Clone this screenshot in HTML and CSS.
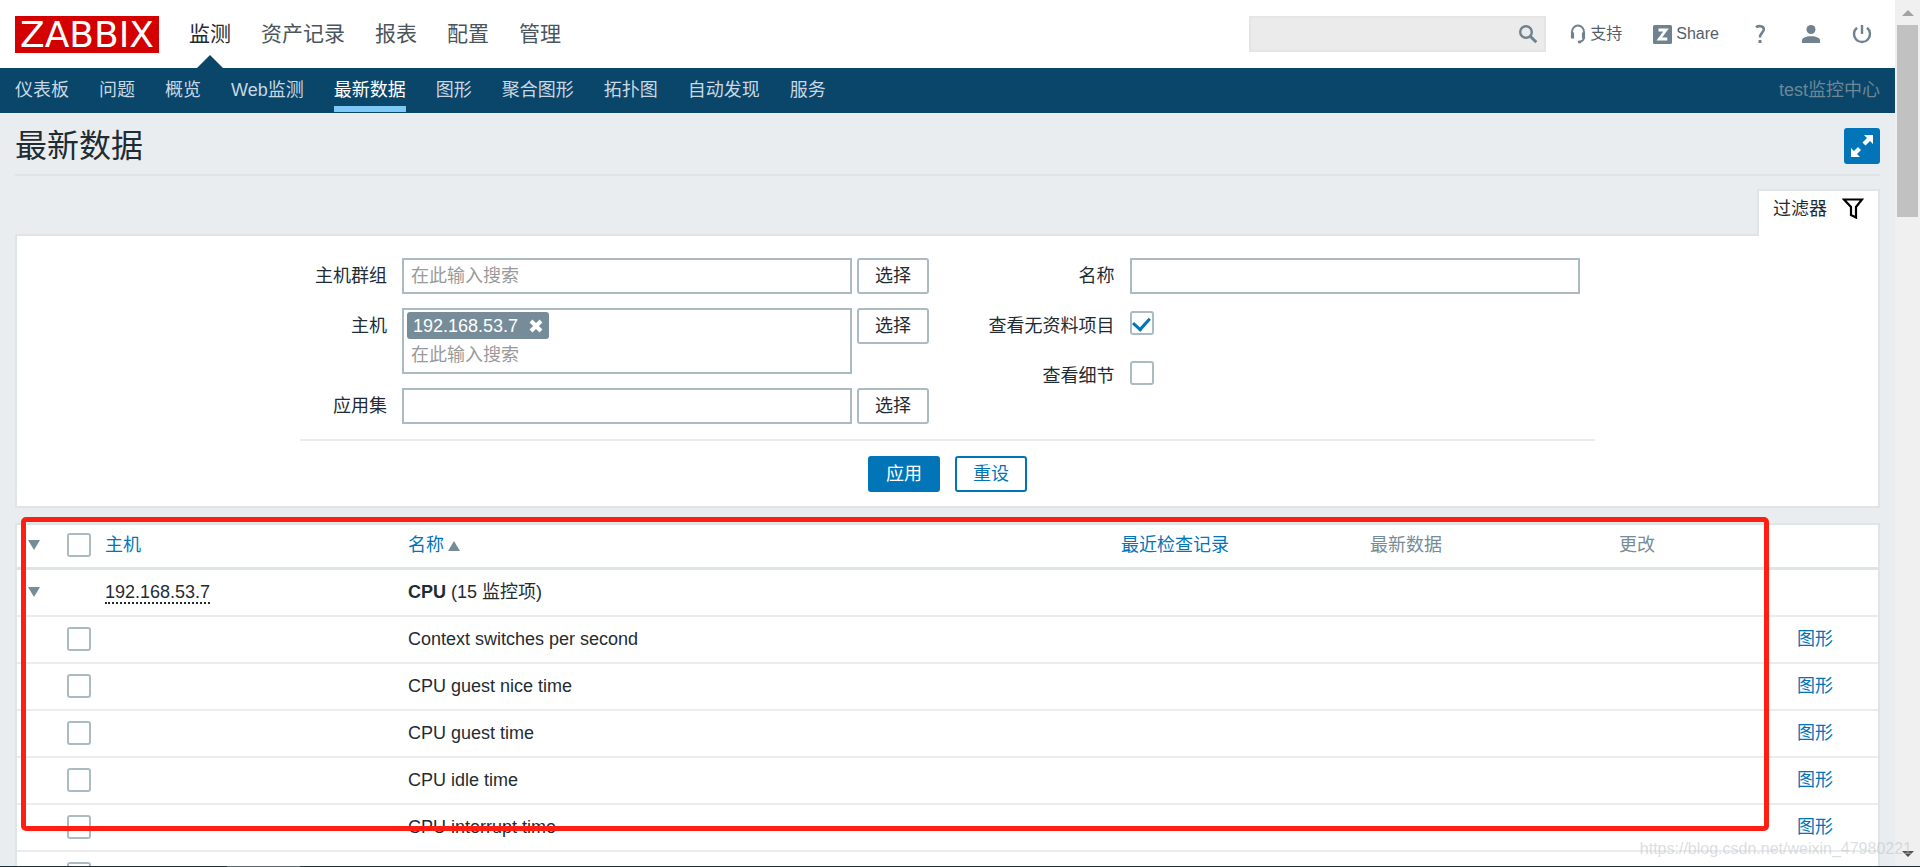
FILE: index.html
```html
<!DOCTYPE html>
<html lang="zh-CN">
<head>
<meta charset="utf-8">
<title>最新数据</title>
<link rel="stylesheet" href="styles.css">
</head>
<body>
<div class="page">
  <header class="top">
    <a class="logo" href="#">ZABBIX</a>
    <nav class="main-menu">
      <a class="active" href="#">监测</a>
      <a href="#">资产记录</a>
      <a href="#">报表</a>
      <a href="#">配置</a>
      <a href="#">管理</a>
    </nav>
    <form class="search">
      <input type="text" aria-label="搜索">
      <button type="button" aria-label="搜索">
        <svg width="20" height="20" viewBox="0 0 20 20" fill="none" stroke="#6f828d"><circle cx="8" cy="8" r="5.8" stroke-width="2.4"/><path d="M12 12l6.3 6.3" stroke-width="3"/></svg>
      </button>
    </form>
    <a class="tool support" href="#">
      <svg width="16" height="20" viewBox="0 0 16 20" fill="none" stroke="#6f828d" stroke-width="2"><path d="M2 9.500V8a6 6.500 0 0 1 12 0v5c0 3-1.500 4.500-5 5"/><path d="M2.500 8.500v6M13.500 8.500v6" stroke-width="3.200"/><path d="M8 18h3" stroke-width="2.600"/></svg>
      <span>支持</span>
    </a>
    <a class="tool share" href="#">
      <svg width="19" height="19" viewBox="0 0 19 19"><rect width="19" height="19" rx="1.500" fill="#6f828d"/><path d="M5.500 5h7.500L6.300 14h8" fill="none" stroke="#fff" stroke-width="2.800"/></svg>
      <span>Share</span>
    </a>
    <a class="tool icon" href="#" aria-label="帮助">
      <svg width="20" height="20" viewBox="0 0 20 20" fill="none" stroke="#6f828d" stroke-width="2.600"><path d="M6 3.200C8 1.700 13.800 1.300 13.800 5.200c0 3.300-3.800 3.800-3.800 8.300"/><path d="M10 16v3" stroke-width="3"/></svg>
    </a>
    <a class="tool icon" href="#" aria-label="用户">
      <svg width="20" height="20" viewBox="0 0 20 20" fill="#6f828d"><circle cx="10" cy="5.500" r="4.500"/><path d="M1 19v-2.500C1 14 4.500 12.300 10 12.300s9 1.700 9 4.200V19z"/></svg>
    </a>
    <a class="tool icon" href="#" aria-label="退出">
      <svg width="20" height="20" viewBox="0 0 20 20" fill="none" stroke="#6f828d" stroke-width="2.400"><path d="M10 1v9"/><path d="M5 3.800a8 8 0 1 0 10 0"/></svg>
    </a>
  </header>

  <nav class="sub-menu">
    <a href="#">仪表板</a>
    <a href="#">问题</a>
    <a href="#">概览</a>
    <a href="#">Web监测</a>
    <a class="active" href="#">最新数据</a>
    <a href="#">图形</a>
    <a href="#">聚合图形</a>
    <a href="#">拓扑图</a>
    <a href="#">自动发现</a>
    <a href="#">服务</a>
    <span class="server">test监控中心</span>
  </nav>

  <main class="content">
    <div class="title-row">
      <h1>最新数据</h1>
      <button class="fullscreen" type="button" aria-label="全屏">
        <svg width="22" height="22" viewBox="0 0 22 22" fill="#fff"><path d="M13 0h9v9l-3-3-4.500 4.500-3-3L16 3zM0 13l3 3 4-4 3 3-4 4 3 3H0z"/></svg>
      </button>
    </div>

    <div class="tab-row">
      <a class="filter-tab" href="#"><span>过滤器</span>
        <svg width="22" height="21" viewBox="0 0 22 21" fill="none" stroke="#000" stroke-width="2.200"><path d="M2 1.500h18L14 9v10.500L9 17V9z"/></svg>
      </a>
    </div>

    <form class="filter">
      <div class="fields">
        <div class="column left">
          <div class="field">
            <label for="groups">主机群组</label>
            <input class="box" id="groups" type="text" placeholder="在此输入搜索">
            <button class="btn select" type="button">选择</button>
          </div>
          <div class="field">
            <label for="hosts">主机</label>
            <div class="box multi">
              <span class="chip">192.168.53.7
                <button type="button" aria-label="移除"><svg width="14" height="14" viewBox="0 0 14 14" stroke="#fff" stroke-width="4"><path d="M2 2l10 10M12 2L2 12"/></svg></button>
              </span>
              <input id="hosts" type="text" placeholder="在此输入搜索">
            </div>
            <button class="btn select" type="button">选择</button>
          </div>
          <div class="field">
            <label for="app">应用集</label>
            <input class="box" id="app" type="text">
            <button class="btn select" type="button">选择</button>
          </div>
        </div>
        <div class="column right">
          <div class="field">
            <label for="name">名称</label>
            <input class="box" id="name" type="text">
          </div>
          <div class="field">
            <label for="nodata">查看无资料项目</label>
            <input class="check" id="nodata" type="checkbox" checked>
          </div>
          <div class="field">
            <label for="details">查看细节</label>
            <input class="check" id="details" type="checkbox">
          </div>
        </div>
      </div>
      <div class="actions">
        <button class="btn primary" type="button">应用</button>
        <button class="btn outline" type="button">重设</button>
      </div>
    </form>

    <table class="data">
      <colgroup><col class="c-toggle"><col class="c-check"><col class="c-host"><col><col class="c-value"><col class="c-value"><col class="c-change"><col class="c-link"></colgroup>
      <thead>
        <tr>
          <th><button class="arrow down" type="button" aria-label="全部折叠"></button></th>
          <th><input class="check" type="checkbox" aria-label="全选"></th>
          <th><a href="#">主机</a></th>
          <th><a href="#">名称<span class="arrow up"></span></a></th>
          <th><a href="#">最近检查记录</a></th>
          <th>最新数据</th>
          <th>更改</th>
          <th></th>
        </tr>
      </thead>
      <tbody>
        <tr><td><button class="arrow down" type="button" aria-label="折叠"></button></td><td></td><td><a class="host" href="#">192.168.53.7</a></td><td><b>CPU</b> (15 监控项)</td><td></td><td></td><td></td><td></td></tr>
        <tr><td></td><td><input class="check" type="checkbox" aria-label="Context switches per second"></td><td></td><td>Context switches per second</td><td></td><td></td><td></td><td><a href="#">图形</a></td></tr>
        <tr><td></td><td><input class="check" type="checkbox" aria-label="CPU guest nice time"></td><td></td><td>CPU guest nice time</td><td></td><td></td><td></td><td><a href="#">图形</a></td></tr>
        <tr><td></td><td><input class="check" type="checkbox" aria-label="CPU guest time"></td><td></td><td>CPU guest time</td><td></td><td></td><td></td><td><a href="#">图形</a></td></tr>
        <tr><td></td><td><input class="check" type="checkbox" aria-label="CPU idle time"></td><td></td><td>CPU idle time</td><td></td><td></td><td></td><td><a href="#">图形</a></td></tr>
        <tr><td></td><td><input class="check" type="checkbox" aria-label="CPU interrupt time"></td><td></td><td>CPU interrupt time</td><td></td><td></td><td></td><td><a href="#">图形</a></td></tr>
        <tr><td></td><td><input class="check" type="checkbox" aria-label="CPU"></td><td></td><td></td><td></td><td></td><td></td><td></td></tr>
      </tbody>
    </table>
  </main>
</div>

<div class="scrollbar">
  <span class="tip up"></span>
  <span class="thumb"></span>
  <span class="tip down"></span>
</div>

<div class="highlight"></div>
<div class="watermark">https://blog.csdn.net/weixin_47980221</div>
<div class="edge"><span></span></div>
</body>
</html>
```
FILE: styles.css
```css
* { box-sizing: border-box; }

body {
  margin: 0;
  position: relative;
  display: flex;
  height: 100vh;
  overflow: hidden;
  background: #e9edf0;
  color: #1f2c33;
  font-family: "Liberation Sans", "Noto Sans CJK SC", sans-serif;
  font-size: 18px;
  font-weight: 400;
  line-height: 24px;
}

a { color: #0275b8; text-decoration: none; }
button, input { font: inherit; color: inherit; }
button { padding: 0; border: 0; background: none; }
svg { display: block; }

.page { flex: 1; min-width: 0; }

/* Header */
.top {
  display: flex;
  align-items: center;
  height: 68px;
  padding: 0 23px 0 15px;
  background: #fff;
}
.logo {
  padding: 0 5px;
  background: #d40000;
  color: #fff;
  font-family: "DejaVu Sans", sans-serif;
  font-size: 36px;
  line-height: 37px;
}
.main-menu {
  display: flex;
  align-self: stretch;
  gap: 30px;
  margin-left: 30px;
  font-size: 21px;
  line-height: 68px;
}
.main-menu a { position: relative; color: #4a555c; }
.main-menu .active { color: #1f2c33; }
.main-menu .active::after {
  content: "";
  position: absolute;
  left: 50%;
  bottom: 0;
  margin-left: -13px;
  border: 13px solid transparent;
  border-top: 0;
  border-bottom-color: #0a466a;
}
.search {
  display: flex;
  align-items: center;
  width: 297px;
  height: 36px;
  margin-left: auto;
  padding-right: 6px;
  border: 2px solid #e5e5e5;
  background: #ebebeb;
}
.search input {
  flex: 1;
  min-width: 0;
  border: 0;
  background: transparent;
}
.tool {
  display: flex;
  align-items: center;
  gap: 4px;
  color: #52606a;
  font-size: 16px;
}
.support { margin-left: 24px; }
.share { margin-left: 31px; }
.icon { margin-left: 31px; }

/* Section menu */
.sub-menu {
  display: flex;
  gap: 30px;
  height: 45px;
  padding: 0 15px;
  background: #0a466a;
  line-height: 44px;
}
.sub-menu a { color: #c8d8e2; }
.sub-menu .active {
  height: 44px;
  border-bottom: 6px solid #80c8f6;
  color: #fff;
}
.server { margin-left: auto; color: #6b8798; }

/* Title */
.content { padding: 0 15px; }
.title-row {
  display: flex;
  justify-content: space-between;
  align-items: center;
  height: 63px;
  padding: 10px 0 5px;
  border-bottom: 2px solid #dfe4e7;
}
h1 { margin: 0; font-size: 32px; font-weight: 400; line-height: 36px; }
.fullscreen {
  display: grid;
  place-items: center;
  width: 36px;
  height: 36px;
  border-radius: 3px;
  background: #0275b8;
}

/* Filter */
.tab-row { display: flex; justify-content: flex-end; margin-top: 13px; }
.filter-tab {
  position: relative;
  z-index: 1;
  display: flex;
  align-items: center;
  gap: 15px;
  height: 47px;
  margin-bottom: -2px;
  padding: 0 14px 10px;
  border: 2px solid #dfe4e7;
  border-bottom: 0;
  background: #fff;
  color: #1f2c33;
}
.filter {
  padding: 22px 20px 14px;
  border: 2px solid #dfe4e7;
  background: #fff;
}
.fields {
  display: grid;
  grid-template-columns: 1fr 1fr;
  max-width: 1295px;
  margin: 0 auto;
  padding-bottom: 15px;
  border-bottom: 2px solid #e9edf0;
}
.column { display: flex; flex-direction: column; gap: 14px; }
.field { display: flex; align-items: flex-start; min-height: 36px; }
.field label {
  flex: none;
  margin-right: 15px;
  line-height: 36px;
  text-align: right;
}
.left label { width: 87px; }
.right label { width: 167px; }
.box {
  flex: 0 1 450px;
  min-width: 0;
  min-height: 36px;
  padding: 0 7px;
  border: 2px solid #acbbc2;
  background: #fff;
}
input::placeholder { color: #9a9a9a; opacity: 1; }
.multi { padding: 2px 3px 0; height: 66px; }
.multi input {
  display: block;
  width: 100%;
  height: 32px;
  padding: 0 4px;
  border: 0;
}
.chip {
  display: flex;
  align-items: center;
  gap: 11px;
  width: max-content;
  height: 27px;
  padding: 0 6px;
  border-radius: 3px;
  background: #768d99;
  color: #fff;
}
.btn {
  width: 72px;
  height: 36px;
  border: 2px solid #acbbc2;
  border-radius: 3px;
  background: #fff;
}
.select { margin-left: 5px; }
.actions { display: flex; justify-content: center; gap: 15px; padding-top: 15px; }
.primary { border-color: #0275b8; background: #0275b8; color: #fff; }
.outline { border-color: #0275b8; color: #0275b8; }

.check {
  appearance: none;
  display: block;
  width: 24px;
  height: 24px;
  margin: 0;
  border: 2px solid #acbbc2;
  border-radius: 3px;
  background: #fff;
}
.check:checked {
  display: grid;
  place-items: center;
  padding-bottom: 3px;
}
.check:checked::after {
  content: "";
  width: 8px;
  height: 13px;
  border: solid #0275b8;
  border-width: 0 3px 3px 0;
  transform: rotate(42deg);
}
.field .check { margin-top: 3px; }

/* Data table */
.data {
  width: 100%;
  margin-top: 15px;
  border: 2px solid #dfe4e7;
  border-spacing: 0;
  table-layout: fixed;
  background: #fff;
}
.c-toggle { width: 41px; }
.c-check { width: 38px; }
.c-host { width: 303px; }
.c-value { width: 249px; }
.c-change { width: 178px; }
.c-link { width: 90px; }
.data th, .data td {
  height: 47px;
  padding: 0 9px 2px;
  border-bottom: 2px solid #e9edf0;
  text-align: left;
  font-weight: 400;
}
.data th {
  height: 45px;
  border-bottom: 3px solid #dfe4e7;
  color: #768d99;
}
.data td:first-child, .data th:first-child { padding-left: 11px; }
.data b { font-weight: 700; }
.host { border-bottom: 2px dotted #1f2c33; color: #1f2c33; }
.arrow {
  display: block;
  border: 6px solid transparent;
}
.arrow.down { border-top: 10px solid #768d99; border-bottom: 0; }
.arrow.up {
  display: inline-block;
  margin-left: 4px;
  border-bottom: 10px solid #768d99;
  border-top: 0;
}

/* Scroll strip */
.scrollbar {
  display: flex;
  flex-direction: column;
  align-items: center;
  width: 25px;
  background: #f0f0f0;
}
.thumb { width: 21px; height: 192px; margin-top: 9px; background: #c1c1c1; }
.tip { border: 6px solid transparent; }
.tip.up { margin-top: 10px; border-top: 0; border-bottom-color: #a3a3a3; }
.tip.down { margin: auto 0 10px; border-bottom: 0; border-top-color: #505050; }

/* Overlays */
.highlight {
  position: absolute;
  left: 21px;
  top: 517px;
  right: 151px;
  height: 314px;
  border: 5px solid #ff1f12;
  border-radius: 5px;
}
.watermark {
  position: absolute;
  right: 8px;
  bottom: 6px;
  color: rgba(190, 195, 198, 0.55);
  font-size: 16px;
}
.edge {
  position: absolute;
  left: 0;
  right: 0;
  bottom: 0;
  height: 1px;
  background: #1f2f38;
}
.edge span { display: block; width: 73px; height: 1px; margin-left: 227px; background: #5a6a70; }
```
